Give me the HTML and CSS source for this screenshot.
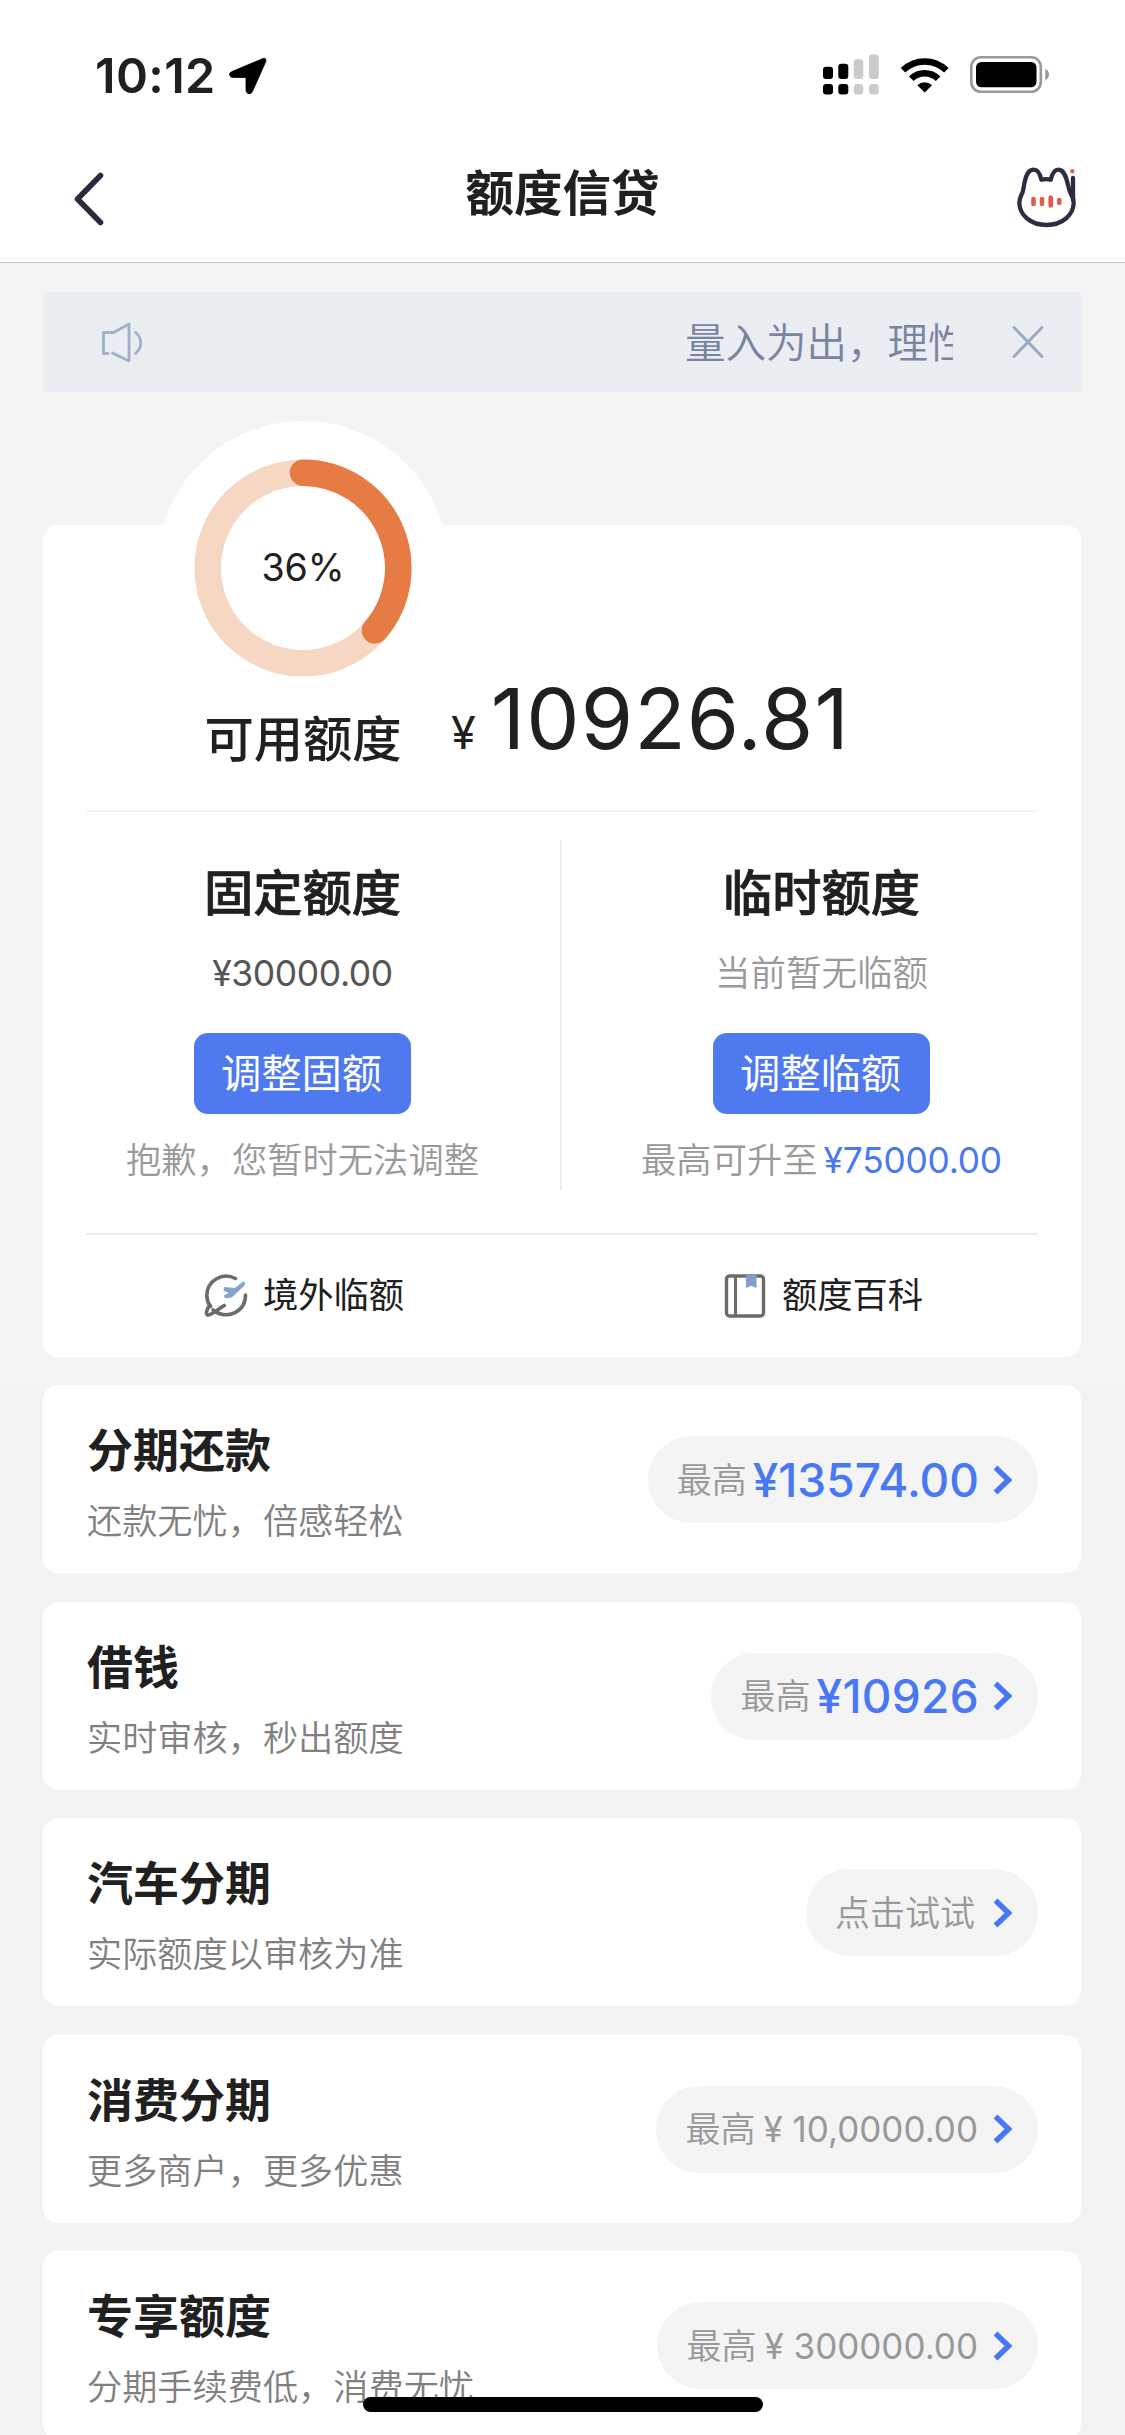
FILE: index.html
```html
<!DOCTYPE html>
<html lang="zh-CN">
<head>
<meta charset="utf-8">
<title>额度信贷</title>
<link rel="stylesheet" href="styles.css">
</head>
<body>
<header class="status">
  <div class="status-left">
    <span class="time">10:12</span>
    <svg class="locate" width="38" height="38" viewBox="0 0 38 38"><path d="M34 1.500 Q37.500 .5 36.800 4.500 L23.500 34.500 Q21.800 38 19 36.500 Q17 35.500 17 33 V20.500 H4.500 Q1 20.500 .5 17.700 Q.3 15.500 3.500 14.300 Z" stroke="#000" stroke-width=".8"/></svg>
  </div>
  <svg width="230" height="42" viewBox="0 0 230 42">
    <g fill="#000"><rect x="3" y="13.700" width="10" height="12.300" rx="3"/><rect x="18.300" y="10.700" width="10" height="15.300" rx="3"/><rect x="3" y="31" width="10" height="10.500" rx="3"/><rect x="18.300" y="31" width="10" height="10.500" rx="3"/></g>
    <g fill="#cbcbcb"><rect x="33.700" y="6.300" width="9.600" height="19.700" rx="3"/><rect x="49" y="1.500" width="9.800" height="24.500" rx="3"/><rect x="33.700" y="31" width="9.600" height="10.500" rx="3.500"/><rect x="49" y="31" width="9.800" height="10.500" rx="3.500"/></g>
    <path fill="none" stroke="#000" stroke-width="6.500" d="M83 17.300 A31 31 0 0 1 126.400 17.300 M91.300 25.800 A19 19 0 0 1 118.100 25.800"/>
    <path d="M97.300 32.200 A10.500 10.500 0 0 1 112.100 32.200 L104.700 39.500 Z"/>
    <rect x="151.300" y="4.300" width="69.500" height="34.500" rx="9.500" fill="none" stroke="#999" stroke-width="2.600"/>
    <rect x="156" y="9" width="60.500" height="25.300" rx="5.500"/>
    <path fill="#999" d="M225.300 15.700 Q229 17.500 229 21.500 Q229 25.500 225.300 27.300 Z"/>
  </svg>
</header>
<nav class="nav">
  <svg class="back" width="34" height="56" viewBox="0 0 34 56"><path d="M28.500 4.500 L5.500 28 L28.500 51.500" fill="none" stroke="#2c2a3c" stroke-width="5.600" stroke-linecap="round" stroke-linejoin="round"/></svg>
  <h1>额度信贷</h1>
  <svg class="cat" width="72" height="72" viewBox="0 0 72 72" fill="none" stroke="#2f2c3f" stroke-width="4.300" stroke-linejoin="round" stroke-linecap="round">
    <path d="M12.700 32 C14.300 27 14.500 9.700 23.500 9.700 C28.500 9.700 30.500 15.500 31.300 19.700 Q36 18.700 40.700 19.700 C41.800 15 43.500 9.700 48.500 9.700 C56.500 9.700 57.500 26 60 32 C62 36.500 63.700 38 63.700 43 C63.300 55 52.500 65 36.500 65 C20.500 65 9.700 55 9.300 43 C9.300 38 11 36 12.700 32 Z"/>
    <path d="M63 18 V40"/>
    <circle cx="62.300" cy="11.300" r="2.200" fill="#e8604f" stroke="none"/>
    <path stroke="#e05b4a" stroke-width="4.600" d="M23.500 39 V44 M32 39 V44 M40.700 37.500 V45.500 M49.300 40 V43"/>
  </svg>
</nav>
<main>
  <section class="notice">
    <svg width="44" height="44" viewBox="0 0 44 44" fill="none" stroke="#9fb2c8" stroke-width="2.800" stroke-linecap="round" stroke-linejoin="round"><path d="M8 33.500 H3.500 V12.500 H13.500 L29 4 V41 L12.500 33"/><path d="M35.500 12.500 C42.500 18.500 42.500 27.500 35.500 33.500"/></svg>
    <p class="ticker"><span>量入为出，理性</span></p>
    <svg width="34" height="34" viewBox="0 0 34 34"><path d="M3 2.500 L31 31.500 M31 2.500 L3 31.500" stroke="#97abc1" stroke-width="2.900" stroke-linecap="round"/></svg>
  </section>

  <section class="card quota">
    <div class="balance">
      <div class="gauge-col">
        <div class="gauge">
          <svg width="218" height="218" viewBox="0 0 218 218" fill="none" stroke-width="26.500">
            <circle cx="109" cy="110" r="95.300" stroke="#f5d7c4"/>
            <path d="M109 14.700 A95.300 95.300 0 0 1 181 172.400" stroke="#e67b43" stroke-linecap="round"/>
          </svg>
          <span class="percent">36%</span>
        </div>
        <h2>可用额度</h2>
      </div>
      <p class="amount"><span class="yen">¥</span>10926.81</p>
    </div>
    <div class="limits">
      <div class="limit">
        <h2>固定额度</h2>
        <p class="value">¥30000.00</p>
        <button>调整固额</button>
        <p class="hint">抱歉，您暂时无法调整</p>
      </div>
      <div class="limit">
        <h2>临时额度</h2>
        <p class="value none">当前暂无临额</p>
        <button>调整临额</button>
        <p class="hint">最高可升至<b>¥75000.00</b></p>
      </div>
    </div>
    <div class="links">
      <a class="link">
        <svg width="46" height="48" viewBox="0 0 46 48" fill="none" stroke="#6b6b6b" stroke-width="3.600" stroke-linecap="round" stroke-linejoin="round">
          <path d="M32.500 6.500 C19 -.5 3.800 9 3.800 23.500 C3.800 28 5 31 7.500 34.500"/><path d="M42.500 23 C42.500 40 24 48.500 10 38"/><path d="M6.800 33 C3.500 37.500 2.500 42 4.500 43 C8 43.800 15 37 21.300 33.500"/>
          <path fill="#84a5d0" stroke="#84a5d0" stroke-width="1" d="M40.500 10 Q43 11 41 13.500 L31.500 22.500 Q28 26.500 22 25.500 L21.500 23.500 L27 21 L21 18.500 L21.500 15.500 L31.500 16.500 Z"/>
        </svg>
        <span>境外临额</span>
      </a>
      <a class="link">
        <svg width="46" height="48" viewBox="0 0 46 48"><rect x="4.500" y="4" width="37" height="40" rx="3" fill="none" stroke="#6b6b6b" stroke-width="3.400"/><path d="M13.500 5 V43" stroke="#6b6b6b" stroke-width="3"/><path fill="#7fa0c9" d="M24 2.500 H34.500 V16 L29.300 13.800 L24 16 Z"/></svg>
        <span>额度百科</span>
      </a>
    </div>
  </section>
</main>

<section class="products">
  <article class="card product">
    <div><h3>分期还款</h3><p>还款无忧，倍感轻松</p></div>
    <a class="pill">最高<b>¥13574.00</b><svg width="22" height="30" viewBox="0 0 22 30"><path d="M3.500 2.500 L16.500 15 L3.500 27.500"/></svg></a>
  </article>
  <article class="card product">
    <div><h3>借钱</h3><p>实时审核，秒出额度</p></div>
    <a class="pill">最高<b class="loan">¥10926</b><svg width="22" height="30" viewBox="0 0 22 30"><path d="M3.500 2.500 L16.500 15 L3.500 27.500"/></svg></a>
  </article>
  <article class="card product">
    <div><h3>汽车分期</h3><p>实际额度以审核为准</p></div>
    <a class="pill"><span class="try">点击试试</span><svg width="22" height="30" viewBox="0 0 22 30"><path d="M3.500 2.500 L16.500 15 L3.500 27.500"/></svg></a>
  </article>
  <article class="card product">
    <div><h3>消费分期</h3><p>更多商户，更多优惠</p></div>
    <a class="pill">最高<span class="plain">¥ 10,0000.00</span><svg width="22" height="30" viewBox="0 0 22 30"><path d="M3.500 2.500 L16.500 15 L3.500 27.500"/></svg></a>
  </article>
  <article class="card product">
    <div><h3>专享额度</h3><p>分期手续费低，消费无忧</p></div>
    <a class="pill">最高<span class="plain">¥ 300000.00</span><svg width="22" height="30" viewBox="0 0 22 30"><path d="M3.500 2.500 L16.500 15 L3.500 27.500"/></svg></a>
  </article>
</section>
<div class="home-bar"></div>
</body>
</html>
```
FILE: styles.css
```css
* { box-sizing: border-box; margin: 0; padding: 0; }

body {
  width: 1125px;
  height: 2435px;
  overflow: hidden;
  background: #f4f4f4;
  color: #202020;
  font-family: Inter, "Noto Sans CJK SC", sans-serif;
}

svg { display: block; flex: none; }
h1, h2, h3 { font-weight: 500; white-space: nowrap; }

/* Status bar and navigation */
.status {
  height: 125px;
  padding: 53px 75px 0 95px;
  display: flex;
  justify-content: space-between;
  background: #fff;
}
.status-left { display: flex; gap: 13px; }
.time { height: 46px; line-height: 45px; font-size: 48.500px; font-weight: 600; letter-spacing: .4px; }
.locate { margin-top: 4px; }

.nav {
  height: 138px;
  padding: 0 43px 0 72px;
  display: grid;
  grid-template-columns: 72px 1fr 72px;
  align-items: center;
  background: #fff;
  border-bottom: 1px solid #bfc1c0;
  margin-bottom: 29px;
}
.nav h1 { padding-right: 29px; text-align: center; font-size: 48.500px; line-height: 60px; font-weight: 700; }
.back { margin-top: 11px; }
.cat { margin-top: 5px; }

main { padding: 0 44px 28px 43px; }

/* Scrolling notice */
.notice {
  height: 100px;
  margin-bottom: 133px;
  padding: 0 36px 0 57px;
  display: flex;
  align-items: center;
  background: #eaedf2;
}
.ticker {
  width: 268px;
  margin: 3px 58px 0 auto;
  overflow: hidden;
  white-space: nowrap;
  font-size: 40.500px;
  line-height: 60px;
  font-weight: 350;
  color: #7884a0;
}

.card { background: #fff; border-radius: 15px; }

/* Quota summary */
.quota { height: 832px; padding: 0 43px; }
.balance {
  height: 287px;
  padding-left: 71px;
  display: flex;
  border-bottom: 2px solid #f4f4f4;
}
.gauge-col { width: 292px; margin-top: -104px; text-align: center; }
.gauge {
  height: 292px;
  display: grid;
  place-items: center;
  background: #fff;
  border-radius: 50%;
}
.gauge > * { grid-area: 1 / 1; }
.percent { padding-top: 2px; font-size: 37.500px; line-height: 46px; }
h2 { font-size: 49.300px; line-height: 52px; }
.amount { margin: 143px 0 0 2px; font-size: 84.500px; line-height: 100px; white-space: nowrap; letter-spacing: 1.1px; }
.yen { font-size: 45px; margin-right: 14px; }

.limits { height: 423px; display: grid; grid-template-columns: 1fr 1fr; border-bottom: 2px solid #ededed; }
.limit { display: flex; flex-direction: column; align-items: center; padding: 55px 0 0; }
.limit h2 { -webkit-text-stroke: .7px #202020; }
.limit:first-child { background: linear-gradient(#ececec, #ececec) right 28px / 2px 350px no-repeat; padding-right: 43px; }
.limit:last-child { padding-left: 43px; }
.value { margin-top: 32px; font-size: 35.500px; line-height: 46px; color: #555; letter-spacing: -.4px; }
.value.none { color: #999; font-weight: 350; letter-spacing: 0; }
button {
  width: 217px;
  height: 81px;
  margin-top: 36px;
  border: 0;
  border-radius: 14px;
  background: #4f79ee;
  color: #fff;
  padding-right: 2px;
  font: 400 40.300px/78px Inter, "Noto Sans CJK SC", sans-serif;
}
.hint { margin-top: 24px; font-size: 35.300px; line-height: 46px; color: #999; font-weight: 350; white-space: nowrap; }
.hint b { margin-left: 6px; font-weight: 400; letter-spacing: -.2px; color: #4878f4; }

.links { height: 122px; display: grid; grid-template-columns: 1fr 1fr; }
.link { display: flex; align-items: center; justify-content: center; gap: 14px; font-size: 35.300px; line-height: 46px; }
.link:first-child { padding-right: 41px; }
.link:last-child { padding-left: 45px; }

/* Product list */
.products {
  padding: 0 44px 0 43px;
  display: flex;
  flex-direction: column;
  gap: 28.500px;
  background: #f2f3f5;
}
.product {
  height: 188px;
  flex: none;
  padding: 0 43px 0 44px;
  display: flex;
  justify-content: space-between;
}
.product h3 { margin-top: 36px; font-size: 46px; line-height: 58px; font-weight: 700; }
.product p { margin-top: 19px; font-size: 35.200px; line-height: 46px; font-weight: 350; color: #808080; }
.pill {
  height: 87px;
  margin-top: 51px;
  padding: 0 24px 0 29px;
  display: flex;
  align-items: center;
  border-radius: 44px;
  background: #f4f4f4;
  color: #999;
  font-size: 35px;
  line-height: 46px;
  font-weight: 350;
  white-space: nowrap;
}
.pill b { margin: 0 -1px 0 6px; font-size: 46px; font-weight: 500; color: #4878f4; }
.pill .loan { letter-spacing: .3px; }
.plain { margin-left: 8px; font-weight: 400; white-space: pre; }
.try { margin-right: 3px; }
.pill svg { margin-left: 14px; fill: none; stroke: #4878f0; stroke-width: 5.500; }

.home-bar {
  position: absolute;
  left: 363px;
  top: 2397px;
  width: 400px;
  height: 15px;
  border-radius: 8px;
  background: #000;
}
```
